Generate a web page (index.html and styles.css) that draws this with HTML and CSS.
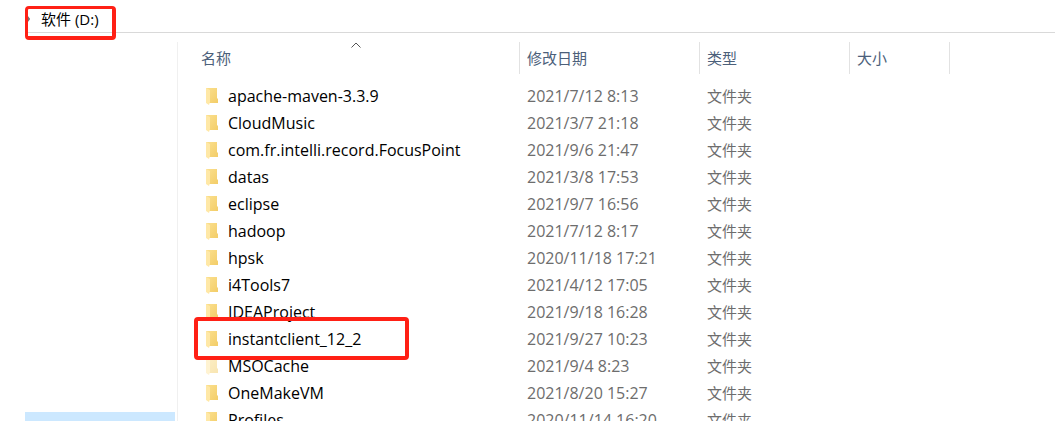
FILE: index.html
```
<!DOCTYPE html>
<html lang="zh-CN">
<head>
    <meta charset="UTF-8">
    <meta name="viewport" content="width=device-width, initial-scale=1.0">
    <title>软件 (D:)</title>
    <link rel="stylesheet" href="styles.css">
</head>
<body>
    <!-- Folder icons, shared by all rows -->
    <svg class="sprite" aria-hidden="true">
        <defs>
            <linearGradient id="folder-back" x1="0" y1="0" x2="1" y2="1">
                <stop offset="0" stop-color="#fbe08f"/>
                <stop offset="1" stop-color="#f3cd68"/>
            </linearGradient>
        </defs>
        <symbol id="folder" viewBox="0 0 12 17">
            <path d="M0 0H11V10L12 11V15H3L0 14Z" fill="url(#folder-back)"/>
            <path d="M0 0L4 2V14L3 17L0 15Z" fill="#ffe8a6"/>
        </symbol>
    </svg>

    <div class="explorer">
        <nav class="address-bar">
            <svg class="chevron" viewBox="0 0 5 8"><path d="M1 0L4 4L1 8" fill="none" stroke="#777" stroke-width="2"/></svg>
            <button class="crumb" type="button">软件 (D:)</button>
            <span class="mark mark-drive"></span>
        </nav>

        <div class="content">
            <aside class="sidebar">
                <div class="tree-selected"></div>
            </aside>

            <main class="files">
                <table>
                    <colgroup>
                        <col class="col-name">
                        <col class="col-date">
                        <col class="col-type">
                        <col class="col-size">
                    </colgroup>
                    <thead>
                        <tr>
                            <th><button type="button">名称</button><svg class="sort" viewBox="0 0 10 6"><path d="M0.5 5.5L5 1L9.5 5.5" fill="none" stroke="#555"/></svg></th>
                            <th><button type="button">修改日期</button></th>
                            <th><button type="button">类型</button></th>
                            <th><button type="button">大小</button></th>
                        </tr>
                    </thead>
                    <tbody>
                        <tr><td><svg class="icon"><use href="#folder"/></svg>apache-maven-3.3.9</td><td>2021/7/12 8:13</td><td>文件夹</td><td></td></tr>
                        <tr><td><svg class="icon"><use href="#folder"/></svg>CloudMusic</td><td>2021/3/7 21:18</td><td>文件夹</td><td></td></tr>
                        <tr><td><svg class="icon"><use href="#folder"/></svg>com.fr.intelli.record.FocusPoint</td><td>2021/9/6 21:47</td><td>文件夹</td><td></td></tr>
                        <tr><td><svg class="icon"><use href="#folder"/></svg>datas</td><td>2021/3/8 17:53</td><td>文件夹</td><td></td></tr>
                        <tr><td><svg class="icon"><use href="#folder"/></svg>eclipse</td><td>2021/9/7 16:56</td><td>文件夹</td><td></td></tr>
                        <tr><td><svg class="icon"><use href="#folder"/></svg>hadoop</td><td>2021/7/12 8:17</td><td>文件夹</td><td></td></tr>
                        <tr><td><svg class="icon"><use href="#folder"/></svg>hpsk</td><td>2020/11/18 17:21</td><td>文件夹</td><td></td></tr>
                        <tr><td><svg class="icon"><use href="#folder"/></svg>i4Tools7</td><td>2021/4/12 17:05</td><td>文件夹</td><td></td></tr>
                        <tr><td><svg class="icon"><use href="#folder"/></svg>IDEAProject</td><td>2021/9/18 16:28</td><td>文件夹</td><td></td></tr>
                        <tr><td><svg class="icon"><use href="#folder"/></svg>instantclient_12_2<span class="mark mark-row"></span></td><td>2021/9/27 10:23</td><td>文件夹</td><td></td></tr>
                        <tr class="hidden-folder"><td><svg class="icon"><use href="#folder"/></svg>MSOCache</td><td>2021/9/4 8:23</td><td>文件夹</td><td></td></tr>
                        <tr><td><svg class="icon"><use href="#folder"/></svg>OneMakeVM</td><td>2021/8/20 15:27</td><td>文件夹</td><td></td></tr>
                        <tr><td><svg class="icon"><use href="#folder"/></svg>Profiles</td><td>2020/11/14 16:20</td><td>文件夹</td><td></td></tr>
                    </tbody>
                </table>
            </main>
        </div>
    </div>
</body>
</html>
```
FILE: styles.css
```
* { box-sizing: border-box; }

body {
    margin: 0;
    padding: 6px 0 21px 25px;
    height: 100vh;
    background: #fff;
    color: #000;
    font-family: "Open Sans", "Noto Sans CJK SC", sans-serif;
    font-size: 15px;
}

button {
    padding: 0;
    border: none;
    background: none;
    color: inherit;
    font: inherit;
}

.sprite {
    position: absolute;
    width: 0;
    height: 0;
}

.explorer {
    display: flex;
    flex-direction: column;
    height: 100%;
    overflow: hidden;
}

.address-bar {
    position: relative;
    display: flex;
    flex: none;
    align-items: center;
    gap: 11px;
    height: 27px;
    border-bottom: 1px solid #d9d9d9;
}

.chevron {
    width: 5px;
    height: 8px;
}

.crumb {
    line-height: 26px;
}

.content {
    display: flex;
    flex: 1;
    min-height: 0;
    padding-top: 9px;
}

.sidebar {
    display: flex;
    flex: none;
    flex-direction: column;
    justify-content: flex-end;
    width: 153px;
    padding-right: 2px;
    border-right: 1px solid #f0f0f0;
}

.tree-selected {
    height: 9px;
    background: #cce8ff;
}

.files {
    flex: 1;
    min-width: 0;
}

table {
    width: 772px;
    border-collapse: separate;
    border-spacing: 0;
    table-layout: fixed;
}

.col-name { width: 342px; }
.col-date { width: 180px; }
.col-type { width: 150px; }
.col-size { width: 100px; }

th {
    position: relative;
    height: 32px;
    padding: 0 0 0 7px;
    border-right: 1px solid #e2e2e2;
    color: #4c607a;
    font-weight: 400;
    line-height: 32px;
    text-align: left;
}

th:first-child { padding-left: 23px; }

.sort {
    position: absolute;
    top: 0;
    left: 173px;
    width: 10px;
    height: 6px;
}

/* space between the header and the first row */
tbody::before {
    content: "";
    display: block;
    height: 9px;
}

td {
    position: relative;
    height: 27px;
    padding: 0 0 0 7px;
    color: #6d6d6d;
    font-size: 16px;
    line-height: 27px;
    white-space: nowrap;
}

td:first-child {
    padding-left: 28px;
    color: #000;
}

td:nth-child(3) { font-size: 15px; }

.icon {
    width: 12px;
    height: 17px;
    margin-right: 10px;
    vertical-align: -3px;
}

.hidden-folder .icon { opacity: 0.5; }

/* red highlight frames */
.mark {
    position: absolute;
    z-index: 1;
    border: 4px solid #ff2015;
    border-radius: 4px;
    pointer-events: none;
}

.mark-drive {
    top: 0;
    left: 0;
    width: 91px;
    height: 34px;
    border-width: 3px 4px 4px 3px;
}

.mark-row {
    top: -9px;
    left: 16px;
    width: 215px;
    height: 43px;
}
```
